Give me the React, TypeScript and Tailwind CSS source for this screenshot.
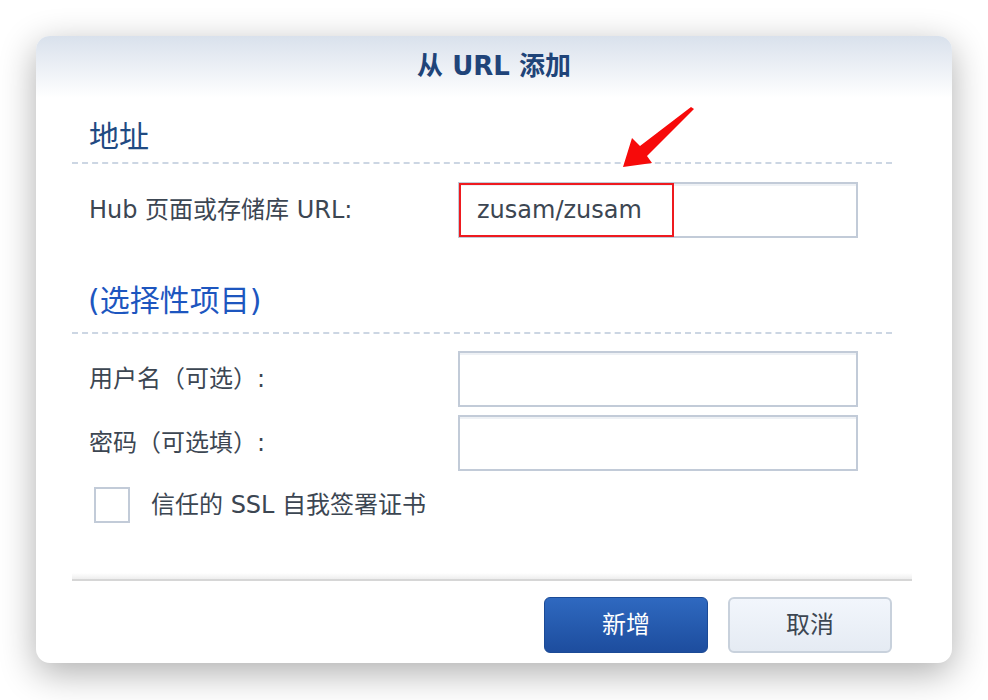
import React from 'react'

const font = { fontFamily: '"DejaVu Sans", "Noto Sans CJK SC", sans-serif' }

function Field({ children }: { children?: React.ReactNode }) {
  return (
    <div className="w-[400px] h-[56px] border-2 border-[#c2cbd8] bg-white shadow-[inset_0_2px_0_#eef1f5] flex items-center">
      {children}
    </div>
  )
}

export default function App() {
  return (
    <div className="w-[988px] h-[700px] bg-white pt-[36px] pl-[36px]" style={font}>
      <div className="relative w-[916px] h-[627px] rounded-[14px] bg-white shadow-[0_10px_36px_rgba(0,0,0,0.32)] overflow-hidden flex flex-col">
        <div className="h-[62px] shrink-0 bg-gradient-to-b from-[#d9e1ec] to-white flex items-center justify-center pb-[2px]">
          <span className="text-[26px] font-bold text-[#1f4479]">从 URL 添加</span>
        </div>

        <div className="px-[36px] pr-[60px]">
          <div className="h-[64px] flex items-center pl-[17px] pt-[12px]">
            <span className="text-[30px] text-[#1f4a82]">地址</span>
          </div>
          <div className="border-t-2 border-dashed border-[#ccd6e3]" />
          <div className="flex items-center h-[58px] mt-[17px]">
            <span className="w-[386px] pl-[17px] text-[24px] text-[#3c4652]">Hub 页面或存储库 URL:</span>
            <Field>
              <div className="ml-[-1px] w-[215px] h-[54px] border-2 border-[#ee1a1f] flex items-center pl-[16px] text-[24px] text-[#3c4652]">
                zusam/zusam
              </div>
            </Field>
          </div>

          <div className="h-[71px] flex items-end pl-[16px] pb-[9px] mt-[22px]">
            <span className="text-[30px] text-[#1d56bf]">(选择性项目)</span>
          </div>
          <div className="border-t-2 border-dashed border-[#ccd6e3]" />
          <div className="flex items-center h-[56px] mt-[17px]">
            <span className="w-[386px] pl-[17px] text-[24px] text-[#3c4652]">用户名（可选）:</span>
            <Field />
          </div>
          <div className="flex items-center h-[56px] mt-[8px]">
            <span className="w-[386px] pl-[17px] text-[24px] text-[#3c4652]">密码（可选填）:</span>
            <Field />
          </div>
          <div className="flex items-center h-[36px] mt-[16px] pl-[22px]">
            <div className="w-[36px] h-[36px] border-2 border-[#c2cbd8] bg-white" />
            <span className="ml-[21px] text-[24px] text-[#3c4652]">信任的 SSL 自我签署证书</span>
          </div>
        </div>

        <div className="ml-[36px] mr-[40px] mt-[50px] h-[8px] bg-gradient-to-b from-white to-[#eeeeee] border-b-2 border-[#d6d6d6]" />

        <div className="flex justify-end gap-[20px] pr-[60px] mt-[16px]">
          <button className="w-[164px] h-[56px] rounded-[6px] border border-[#1b4a96] bg-gradient-to-b from-[#2f69c0] to-[#1d4d9e] text-white text-[24px]">
            新增
          </button>
          <button className="w-[164px] h-[56px] rounded-[6px] border-2 border-[#c8d1dc] bg-gradient-to-b from-[#f2f6fc] to-[#e5ebf3] text-[#3c4652] text-[24px]">
            取消
          </button>
        </div>

        <svg className="absolute left-0 top-0 pointer-events-none" width="916" height="627" viewBox="36 36 916 627">
          <polygon points="694,109 647,156 652,163 623,167 632,138 640,146 691,107" fill="#f70a0a" />
        </svg>
      </div>
    </div>
  )
}
